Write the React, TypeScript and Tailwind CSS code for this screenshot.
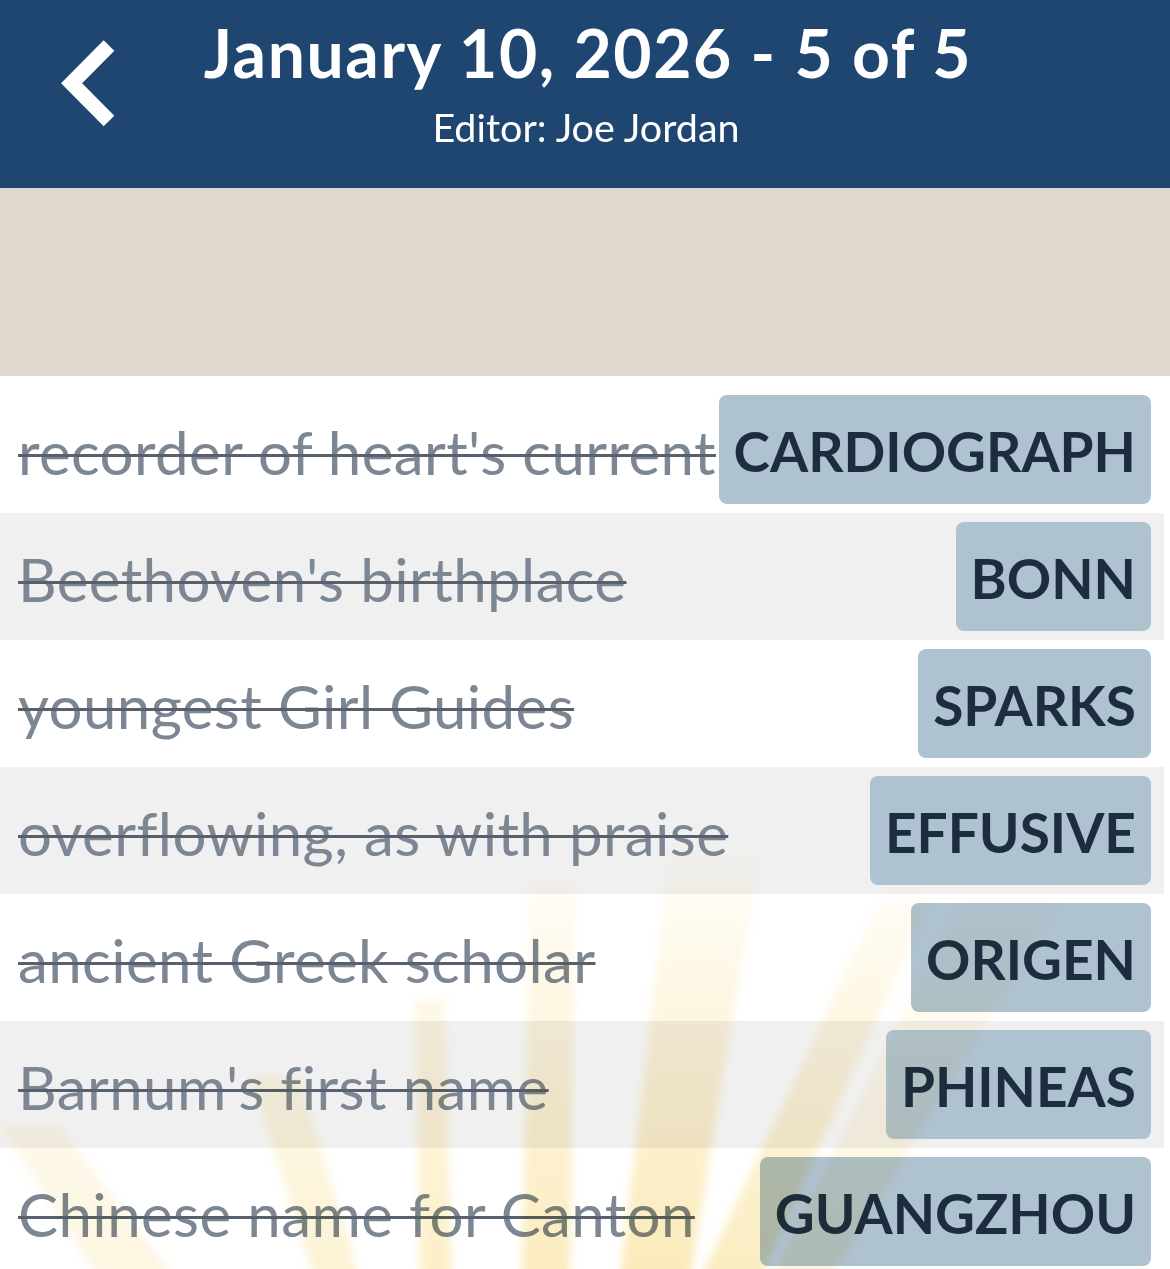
import React from "react";

const rows = [
  { clue: "recorder of heart's current", answer: "CARDIOGRAPH" },
  { clue: "Beethoven's birthplace", answer: "BONN" },
  { clue: "youngest Girl Guides", answer: "SPARKS" },
  { clue: "overflowing, as with praise", answer: "EFFUSIVE" },
  { clue: "ancient Greek scholar", answer: "ORIGEN" },
  { clue: "Barnum's first name", answer: "PHINEAS" },
  { clue: "Chinese name for Canton", answer: "GUANGZHOU" },
];

const rays = [
  { ty: 474, tx1: 670, tx2: 760, bx1: 620, bx2: 690, o: 0.42 },
  { ty: 524, tx1: 880, tx2: 930, bx1: 700, bx2: 760, o: 0.38 },
  { ty: 524, tx1: 960, tx2: 1060, bx1: 770, bx2: 830, o: 0.2 },
  { ty: 504, tx1: 530, tx2: 575, bx1: 522, bx2: 570, o: 0.4 },
  { ty: 624, tx1: 415, tx2: 445, bx1: 420, bx2: 452, o: 0.34 },
  { ty: 700, tx1: 250, tx2: 300, bx1: 315, bx2: 360, o: 0.26 },
  { ty: 750, tx1: 0, tx2: 60, bx1: 100, bx2: 175, o: 0.18 },
];

function Rays() {
  return (
    <svg
      className="pointer-events-none absolute left-0 top-0 mix-blend-multiply"
      width="1170"
      height="893"
      viewBox="0 0 1170 893"
    >
      <defs>
        <linearGradient id="fade" gradientUnits="userSpaceOnUse" x1="0" y1="450" x2="0" y2="893">
          <stop offset="0" stopColor="#fff" stopOpacity="0" />
          <stop offset="0.5" stopColor="#fff" stopOpacity="0.55" />
          <stop offset="1" stopColor="#fff" stopOpacity="1" />
        </linearGradient>
        <mask id="m">
          <rect x="0" y="0" width="1170" height="893" fill="url(#fade)" />
        </mask>
        <filter id="soft" x="-20%" y="-20%" width="140%" height="140%">
          <feGaussianBlur stdDeviation="4" />
        </filter>
      </defs>
      <g mask="url(#m)">
        <g filter="url(#soft)">
          {rays.map((r, i) => (
            <polygon
              key={i}
              points={`${r.tx1},${r.ty} ${r.tx2},${r.ty} ${r.bx2},903 ${r.bx1},903`}
              fill="#f5cf5e"
              fillOpacity={r.o}
            />
          ))}
        </g>
      </g>
    </svg>
  );
}

export default function App() {
  return (
    <div
      className="w-[1170px] h-[1269px] overflow-hidden bg-white"
      style={{ fontFamily: "Lato, 'Noto Sans', sans-serif" }}
    >
      <header className="relative h-[188px] bg-[#1f4670] flex flex-col items-center text-white">
        <svg
          className="absolute left-[50px] top-[30px]"
          width="70"
          height="105"
          viewBox="0 0 70 105"
        >
          <polyline
            points="59,15.5 21.6,53.3 59,91"
            fill="none"
            stroke="#ffffff"
            strokeWidth="15"
            strokeLinecap="butt"
            strokeLinejoin="miter"
          />
        </svg>
        <div className="ml-[6px] mt-[14px] text-[66px] font-bold leading-[78px] tracking-[1.6px]">
          January 10, 2026 - 5 of 5
        </div>
        <div className="ml-[2px] mt-[12px] text-[39.5px] leading-[46px]">
          Editor: Joe Jordan
        </div>
      </header>
      <div className="h-[188px] bg-[#dfd8cc]" />
      <div className="relative pt-[10px] pr-[6px]">
        {rows.map((r, i) => (
          <div
            key={r.answer}
            className={`flex h-[127px] items-center justify-between gap-[6px] pl-[18px] pr-[13px] ${
              i % 2 === 1 ? "bg-[#f0f0f0]" : "bg-white"
            }`}
          >
            <span className="min-w-0 pt-[4px] text-[60px] leading-none tracking-[0.4px] text-[#7c8793] line-through decoration-[#56616d] decoration-[3px] whitespace-nowrap">
              {r.clue}
            </span>
            <span className="flex h-[109px] shrink-0 items-center rounded-[8px] bg-[#afc2d0] px-[15px] pt-[4px] text-[55px] font-bold leading-none text-[#1c2d3f] whitespace-nowrap">
              {r.answer}
            </span>
          </div>
        ))}
        <Rays />
      </div>
    </div>
  );
}
